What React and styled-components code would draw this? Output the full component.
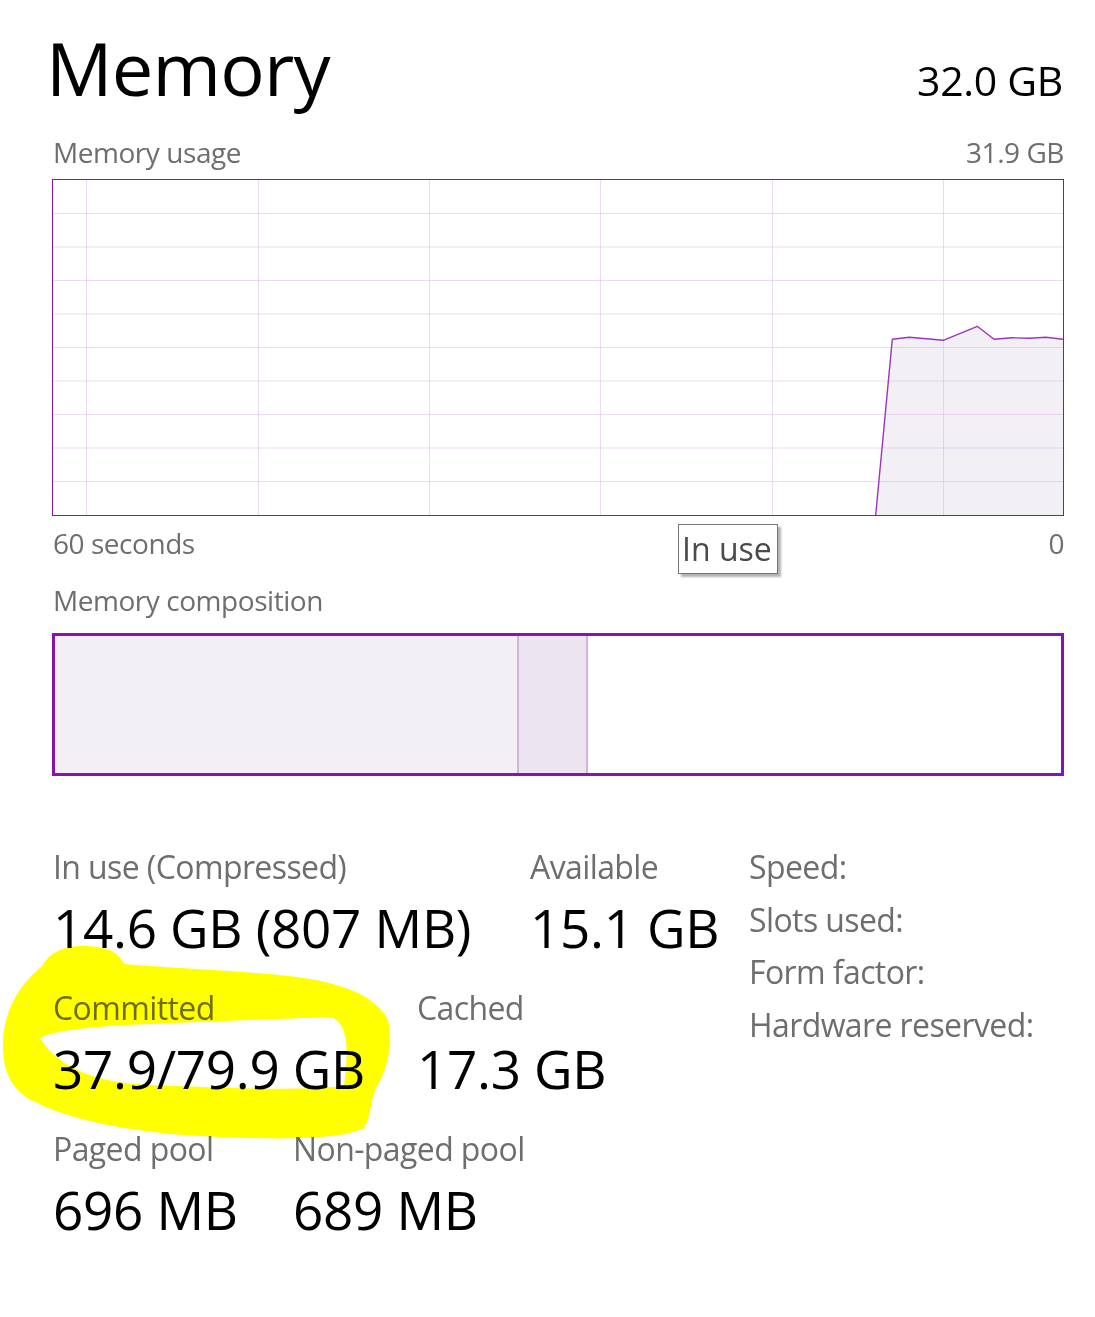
import styled, { createGlobalStyle } from "styled-components"

const GlobalStyle = createGlobalStyle`
  html, body {
    margin: 0;
    padding: 0;
    background: #fff;
  }
  body {
    font-family: "Open Sans", "Noto Sans", sans-serif;
    color: #000;
  }
`

const Page = styled.div`
  position: relative;
  width: 1095px;
  height: 1317px;
  box-sizing: border-box;
  padding: 30px 31px 0 52px;
  overflow: hidden;
`

const Header = styled.div`
  display: flex;
  justify-content: space-between;
  align-items: baseline;
`

const Title = styled.h1`
  margin: 0 0 0 -6px;
  font-size: 74px;
  font-weight: 400;
  line-height: 76px;
  letter-spacing: -0.8px;
`

const Total = styled.div`
  margin-right: 1px;
  font-size: 41px;
  line-height: 50px;
  letter-spacing: -0.3px;
`

const CaptionRow = styled.div`
  display: flex;
  justify-content: space-between;
  position: relative;
  margin: ${p => p.$top}px 0 0 1px;
  font-size: 28px;
  line-height: 34px;
  letter-spacing: -0.45px;
  color: #6e6e6e;
  white-space: nowrap;
`

const Chart = styled.div`
  margin-top: 10px;
  height: 337px;
  border: 1px solid #8b12ae;
  box-sizing: border-box;
  svg {
    display: block;
    width: 100%;
    height: 100%;
  }
`

const Tooltip = styled.div`
  position: absolute;
  left: 625px;
  top: -2px;
  width: 100px;
  height: 50px;
  box-sizing: border-box;
  padding-left: 3px;
  border: 1px solid #777;
  background: #fff;
  box-shadow: 3px 3px 2px rgba(0, 0, 0, 0.3);
  font-size: 32px;
  line-height: 48px;
  letter-spacing: 0;
  color: #4a4a4a;
`

const Composition = styled.div`
  display: flex;
  margin-top: 16px;
  height: 143px;
  border: 3px solid #8b12ae;
  box-sizing: border-box;
`

const Segment = styled.div`
  flex: none;
  width: ${p => p.$w}px;
  background: ${p => p.$bg};
  border-right: 2px solid #d2b3db;
  box-sizing: border-box;
`

const Stats = styled.div`
  display: grid;
  grid-template-columns: 696px 1fr;
  margin: 71px 0 0 1px;
`

const StatRows = styled.div`
  display: flex;
  flex-direction: column;
  gap: 28px;
`

const StatRow = styled.div`
  display: flex;
`

const Stat = styled.div`
  flex: none;
  width: ${p => (p.$w ? p.$w + "px" : "auto")};
`

const Label = styled.div`
  font-size: 32px;
  line-height: 40px;
  letter-spacing: -0.6px;
  color: #6e6e6e;
  white-space: nowrap;
`

const Value = styled.div`
  margin-top: 9px;
  font-size: 53px;
  line-height: 64px;
  letter-spacing: -0.3px;
  white-space: nowrap;
`

const Specs = styled.div`
  display: flex;
  flex-direction: column;
  gap: 12.6px;
`

const Highlight = styled.svg`
  position: absolute;
  left: 0;
  top: 0;
  width: 1095px;
  height: 1317px;
  pointer-events: none;
  mix-blend-mode: multiply;
`

// chart data, in the inner coordinates of the graph (1010 x 335)
const vLines = [33, 205, 376, 547, 719, 890]
const hLines = [1, 2, 3, 4, 5, 6, 7, 8, 9].map(k => k * 33.5)
const usage = [
  [822.7, 335], [839.3, 159.3], [856.3, 157.3], [890.3, 160.3], [924.3, 146.3],
  [941, 159.3], [958.7, 157.7], [976, 158.3], [993, 157.3], [1010, 159.3],
]

const UsageGraph = () => {
  const line = usage.map(p => p.join(",")).join(" ")
  return (
    <svg viewBox="0 0 1010 335" preserveAspectRatio="none">
      <polygon points={line + " 1010,335"} fill="#f2f0f4" />
      {vLines.map(x => (
        <line key={"v" + x} x1={x + 0.5} y1="0" x2={x + 0.5} y2="335" stroke="#d9b4e6" strokeOpacity="0.5" strokeWidth="1" />
      ))}
      {hLines.map(y => (
        <line key={"h" + y} x1="0" y1={y} x2="1010" y2={y} stroke="#d9b4e6" strokeOpacity="0.5" strokeWidth="1" />
      ))}
      <polyline points={line} fill="none" stroke="#9b35c0" strokeWidth="1.4" strokeLinejoin="round" />
    </svg>
  )
}

const App = () => {
  return (
    <Page>
      <GlobalStyle />
      <Header>
        <Title>Memory</Title>
        <Total>32.0 GB</Total>
      </Header>

      <CaptionRow $top={29}>
        <span>Memory usage</span>
        <span>31.9 GB</span>
      </CaptionRow>
      <Chart>
        <UsageGraph />
      </Chart>
      <CaptionRow $top={10}>
        <span>60 seconds</span>
        <Tooltip>In use</Tooltip>
        <span>0</span>
      </CaptionRow>

      <CaptionRow $top={23}>
        <span>Memory composition</span>
      </CaptionRow>
      <Composition>
        <Segment $w={464} $bg="#f3f0f5" />
        <Segment $w={69} $bg="#ede4f2" />
      </Composition>

      <Stats>
        <StatRows>
          <StatRow>
            <Stat $w={477}>
              <Label>In use (Compressed)</Label>
              <Value>14.6 GB (807 MB)</Value>
            </Stat>
            <Stat>
              <Label>Available</Label>
              <Value>15.1 GB</Value>
            </Stat>
          </StatRow>
          <StatRow>
            <Stat $w={364}>
              <Label>Committed</Label>
              <Value>37.9/79.9 GB</Value>
            </Stat>
            <Stat>
              <Label>Cached</Label>
              <Value>17.3 GB</Value>
            </Stat>
          </StatRow>
          <StatRow>
            <Stat $w={240}>
              <Label>Paged pool</Label>
              <Value>696 MB</Value>
            </Stat>
            <Stat>
              <Label>Non-paged pool</Label>
              <Value>689 MB</Value>
            </Stat>
          </StatRow>
        </StatRows>
        <Specs>
          <Label>Speed:</Label>
          <Label>Slots used:</Label>
          <Label>Form factor:</Label>
          <Label>Hardware reserved:</Label>
        </Specs>
      </Stats>

      {/* yellow marker scribble round the committed figure */}
      <Highlight viewBox="0 0 1095 1317">
        <path
          fillRule="evenodd"
          fill="#ffff00"
          d="M 42 966 C 50 952, 64 946, 82 946 C 102 946, 118 950, 124 964
             C 180 969, 260 971, 310 979 C 350 986, 378 999, 388 1020
             C 392 1040, 390 1065, 376 1088 C 370 1100, 372 1115, 364 1128
             C 340 1140, 280 1140, 200 1136 C 130 1132, 70 1120, 35 1102
             C 10 1090, 3 1070, 3 1045 C 3 1012, 18 986, 42 966 Z
             M 40 1038 C 60 1027, 120 1025, 200 1022 C 260 1020, 310 1017, 333 1018
             C 348 1025, 349 1050, 344 1086 C 300 1091, 220 1088, 150 1085
             C 100 1083, 60 1070, 40 1038 Z"
        />
      </Highlight>
    </Page>
  )
}

export default App
